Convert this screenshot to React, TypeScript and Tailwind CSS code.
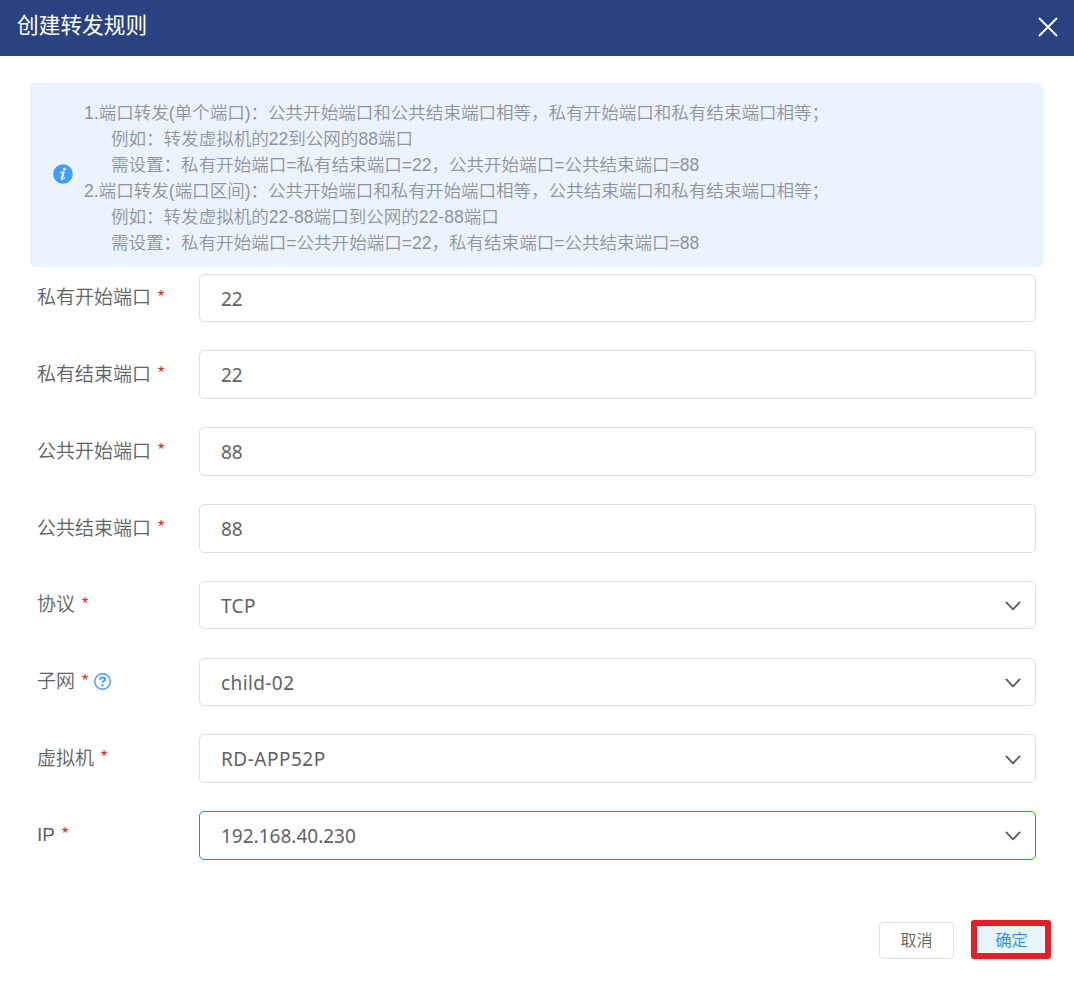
import type { ReactNode } from "react";

interface Field {
  label: string;
  value: string;
  tracking?: string;
  select?: boolean;
  help?: boolean;
  active?: boolean;
}

const fields: Field[] = [
  { label: "私有开始端口", value: "22" },
  { label: "私有结束端口", value: "22" },
  { label: "公共开始端口", value: "88" },
  { label: "公共结束端口", value: "88" },
  { label: "协议", value: "TCP", tracking: "tracking-[0.4px]", select: true },
  { label: "子网", value: "child-02", tracking: "tracking-[0.4px]", select: true, help: true },
  { label: "虚拟机", value: "RD-APP52P", tracking: "tracking-[0.5px]", select: true },
  { label: "IP", value: "192.168.40.230", select: true, active: true },
];

function CloseIcon() {
  return (
    <svg width="20" height="20" viewBox="0 0 20 20" fill="none" stroke="#fff" strokeWidth="1.9" strokeLinecap="round">
      <path d="M1.5 1.5l17 17M18.5 1.5l-17 17" />
    </svg>
  );
}

function InfoIcon() {
  return (
    <svg width="20" height="20" viewBox="0 0 20 20">
      <circle cx="10" cy="10" r="9.8" fill="#409eff" />
      <circle cx="11.3" cy="4.9" r="1.5" fill="#fff" />
      <path d="M7.2 8.7l3.9-.9-1.8 6.9c-.2.8.5.9 2.5-.8" fill="none" stroke="#fff" strokeWidth="1" strokeLinecap="round" strokeLinejoin="round" />
      <path d="M10.3 8.6L8.7 15.1" stroke="#fff" strokeWidth="2" strokeLinecap="round" />
    </svg>
  );
}

function HelpIcon() {
  return (
    <svg width="17" height="17" viewBox="0 0 17 17" fill="none" stroke="#409eff">
      <circle cx="8.5" cy="8.5" r="7.7" strokeWidth="1.4" />
      <path d="M6 6.8c0-1.5 1-2.4 2.5-2.4s2.5.8 2.5 2.1c0 1.5-2.5 1.6-2.5 3.3" strokeWidth="2" />
      <circle cx="8.5" cy="12.2" r="1.2" fill="#409eff" stroke="none" />
    </svg>
  );
}

function ChevronIcon() {
  return (
    <svg width="16" height="10" viewBox="0 0 16 10" fill="none" stroke="#5c5f66" strokeWidth="1.9" strokeLinecap="round" strokeLinejoin="round">
      <path d="M1.4 1.4L8 8.3l6.6-6.9" />
    </svg>
  );
}

function Line({ indent, children }: { indent?: boolean; children: ReactNode }) {
  return <p className={indent ? "pl-[27px]" : ""}>{children}</p>;
}

function FieldRow({ field }: { field: Field }) {
  return (
    <div className="flex h-[48.6px]">
      <div className="flex h-[46px] w-[162px] shrink-0 items-center text-[19px] text-[#606266]">
        <span className={field.label === "IP" ? "pt-[2px]" : "pt-[4px]"}>{field.label}</span>
        <span className="ml-[7px] text-[16px] text-[#ff0000]">*</span>
        {field.help && (
          <span className="ml-[6px] pt-[2px]">
            <HelpIcon />
          </span>
        )}
      </div>
      <div
        className={
          "flex w-[837px] items-center justify-between rounded-[5px] border bg-white pt-[2px] pr-[14px] pl-[21px] " +
          (field.active ? "border-[#1989fa]" : "border-[#dcdfe6]")
        }
      >
        <span className={"font-['Noto_Sans','Noto_Sans_CJK_SC',sans-serif] text-[19px] font-normal text-[#606266] " + (field.tracking ?? "")}>
          {field.value}
        </span>
        {field.select && <ChevronIcon />}
      </div>
    </div>
  );
}

export default function App() {
  return (
    <div className="flex h-[981px] w-[1074px] flex-col bg-white font-['Liberation_Sans','Noto_Sans_CJK_SC',sans-serif] font-[350]">
      <header className="flex h-14 items-center justify-between bg-[#294382] pr-4 pl-[17px]">
        <h1 className="pb-[4px] text-[21.7px] leading-8 font-normal text-white">创建转发规则</h1>
        <span className="pb-[2px]">
          <CloseIcon />
        </span>
      </header>

      <section className="mt-[27px] ml-[30px] flex h-[184px] w-[1013px] items-center rounded-[5px] bg-[#ebf3ff] pl-[23px]">
        <div className="w-[31px] shrink-0 pb-[2px]">
          <InfoIcon />
        </div>
        <div className="pt-[6px] text-[17.54px] leading-[26px] whitespace-nowrap text-[#909399]">
          <Line>1.端口转发(单个端口)：公共开始端口和公共结束端口相等，私有开始端口和私有结束端口相等；</Line>
          <Line indent>例如：转发虚拟机的22到公网的88端口</Line>
          <Line indent>需设置：私有开始端口=私有结束端口=22，公共开始端口=公共结束端口=88</Line>
          <Line>2.端口转发(端口区间)：公共开始端口和私有开始端口相等，公共结束端口和私有结束端口相等；</Line>
          <Line indent>例如：转发虚拟机的22-88端口到公网的22-88端口</Line>
          <Line indent>需设置：私有开始端口=公共开始端口=22，私有结束端口=公共结束端口=88</Line>
        </div>
      </section>

      <form className="flex flex-col gap-[28.2px] pt-[6.6px] pl-[37px]">
        {fields.map((f) => (
          <FieldRow key={f.label} field={f} />
        ))}
      </form>

      <footer className="mt-[60px] flex items-start justify-end gap-[17px] pr-[23px] text-[16px]">
        <button type="button" className="mt-[2px] h-[37px] w-[75px] rounded-[4px] border border-[#dcdfe6] pt-[2px] text-[#606266]">
          取消
        </button>
        <button type="button" className="h-[39px] w-[80px] rounded-[3px] border-6 border-[#ed1c24] bg-[#e8f4ff] pt-[3px] pl-[1px] text-[#1890ff]">
          确定
        </button>
      </footer>
    </div>
  );
}
